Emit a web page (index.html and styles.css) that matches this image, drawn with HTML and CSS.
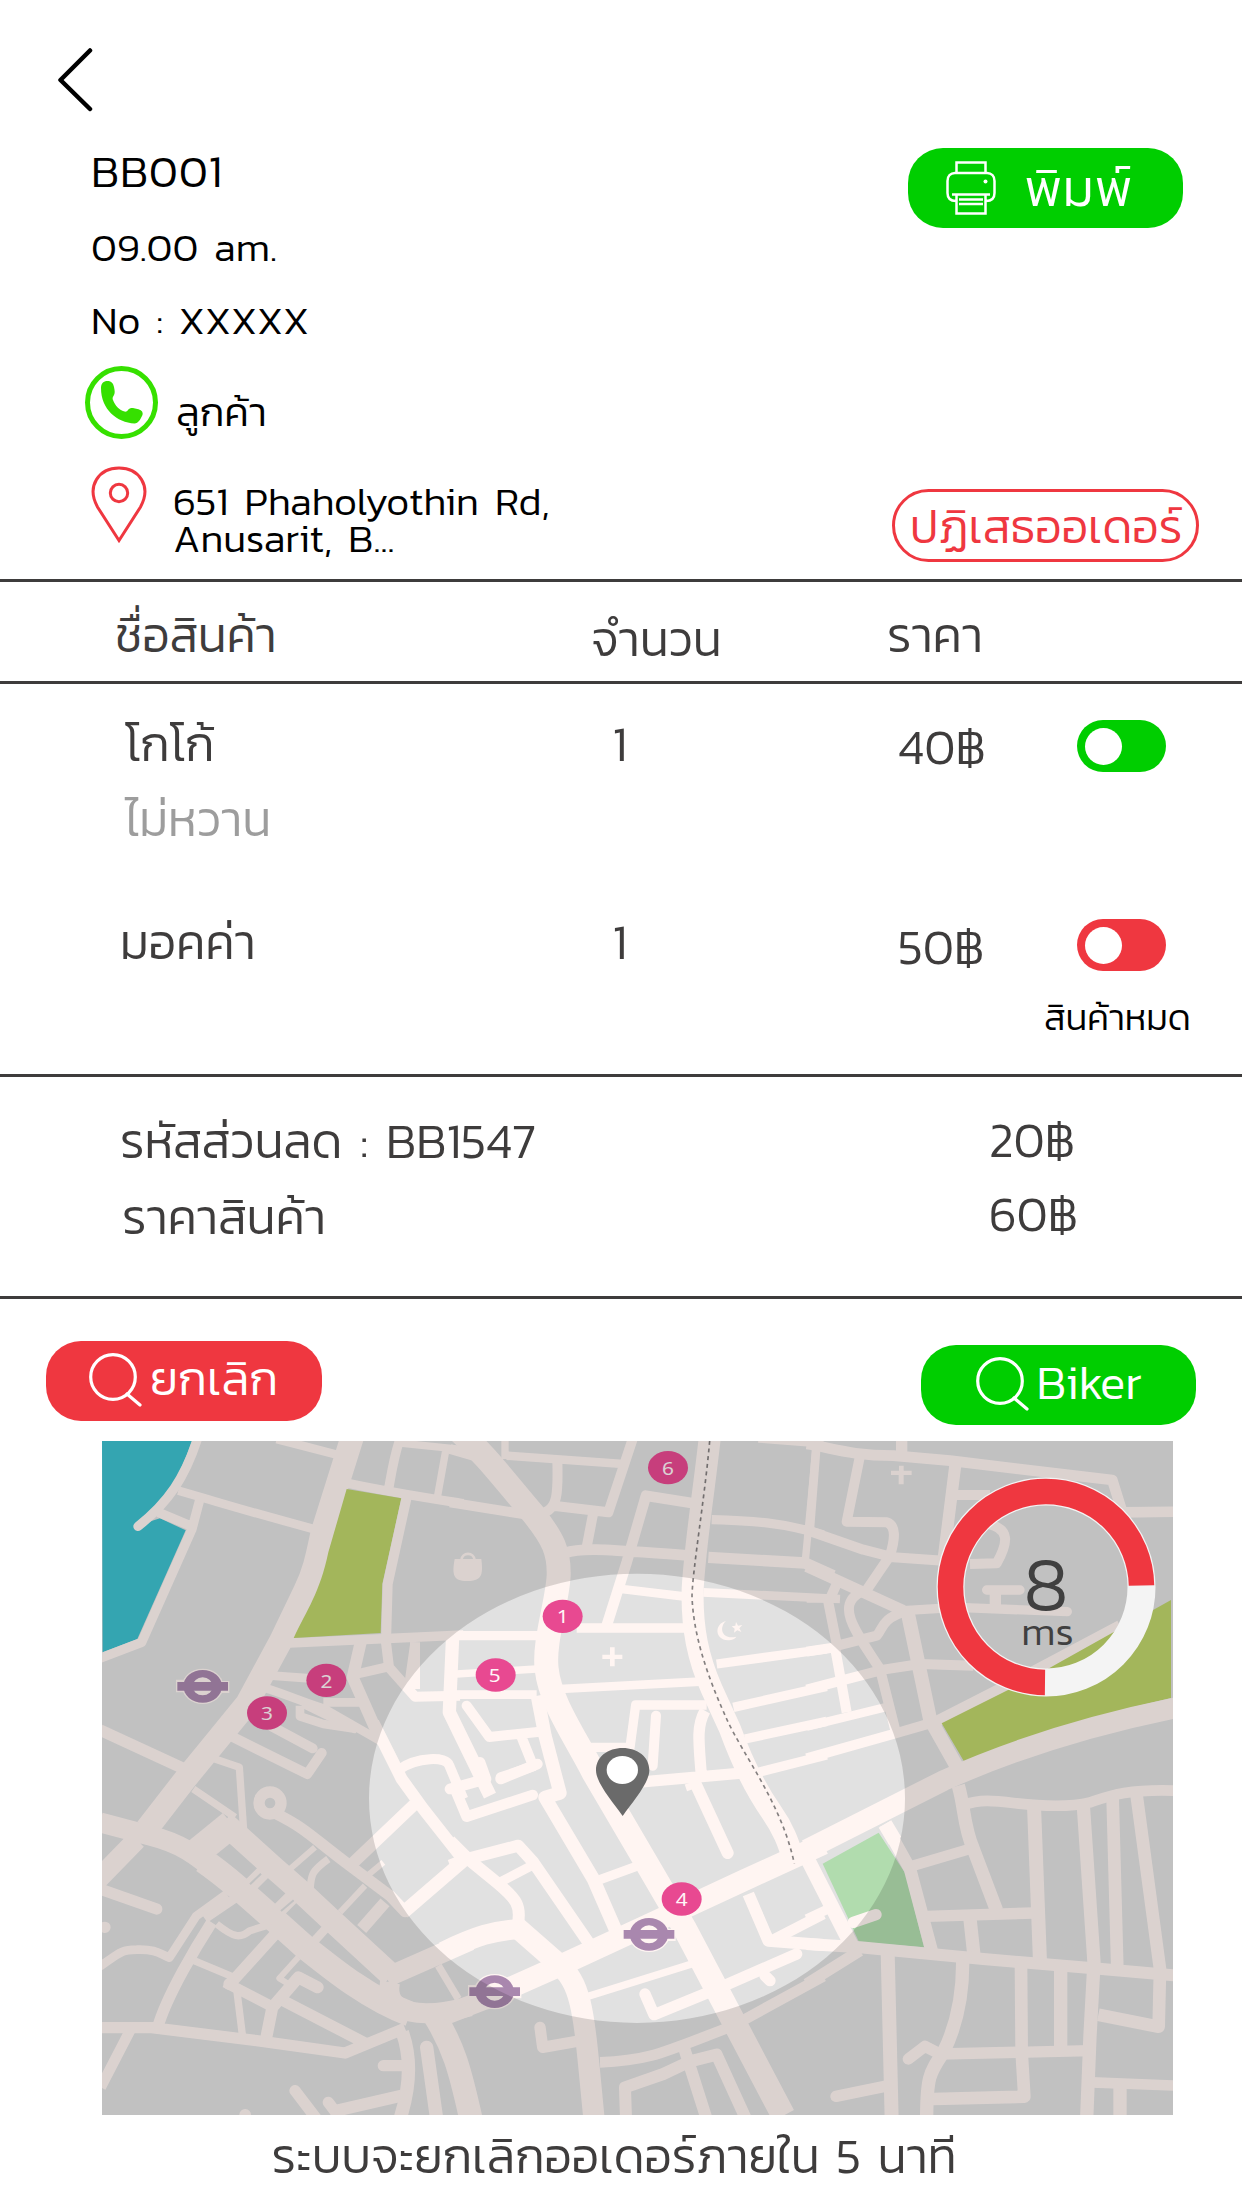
FILE: index.html
```
<!DOCTYPE html>
<html lang="th">
<head>
<meta charset="utf-8">
<title>BB001</title>
<link rel="stylesheet" href="styles.css">
</head>
<body>
<main class="screen">
  <header class="order">
    <nav class="topbar">
      <svg class="back" viewBox="0 0 36 66"><path d="M33 3.500L3.500 33L33 62"/></svg>
    </nav>
    <div class="order-body">
      <div class="details">
        <h1 class="order-id">BB001</h1>
        <p class="line">09.00 am.</p>
        <p class="line">No : XXXXX</p>
        <div class="contact">
          <svg class="phone" viewBox="0 0 73 73">
            <circle cx="36.500" cy="36.500" r="34"/>
            <path d="M16 22C16 17.500 18.500 15 22.500 15C26.500 15 28.300 17.500 29 21C29.800 25 30.300 27.500 28.500 30C27.300 31.500 27.500 33 28 34C30.500 40 33.500 43.500 39.500 45.500C41 46 42 45.300 43 44C44.500 42.300 46.500 41.800 49 42.300L53.500 43.300C57 44.300 58.300 46.500 57.500 49C55.500 53 53.500 57.500 49.500 57.500C32 56.500 16 43.500 16 22Z"/>
          </svg>
          <span class="customer">ลูกค้า</span>
        </div>
        <div class="address">
          <svg class="place" viewBox="0 0 56 78">
            <path d="M28 74.500L6.500 41C-5 20 8 2 28 2S61 20 49.500 41Z"/>
            <circle cx="28" cy="27" r="8.700"/>
          </svg>
          <p class="address-text">651 Phaholyothin Rd,<br>Anusarit, B...</p>
        </div>
      </div>
      <div class="order-actions">
        <button class="btn btn-print">
          <svg class="printer" viewBox="0 0 50 54">
            <path d="M10.500 12V1.500H39.500V12M10 40C4 40 1.500 37 1.500 32V20C1.500 15 4.500 12 9 12H41C45.500 12 48.500 15 48.500 20V32C48.500 37 46 40 40 40M6 33.500H44M10.500 34V52.500H39.500V34M13 38.500H37M13 43H37"/>
            <circle cx="39.500" cy="20.500" r="2"/>
          </svg>
          <span>พิมพ์</span>
        </button>
        <button class="btn-reject">ปฏิเสธออเดอร์</button>
      </div>
    </div>
  </header>

  <section class="items">
    <div class="row head">
      <span class="name">ชื่อสินค้า</span>
      <span class="qty">จำนวน</span>
      <span class="price">ราคา</span>
    </div>
    <div class="row item">
      <div class="name cocoa">โกโก้<small class="option">ไม่หวาน</small></div>
      <span class="qty">1</span>
      <span class="price">40฿</span>
      <div class="stock"><i class="toggle on"></i></div>
    </div>
    <div class="row item last">
      <div class="name mocha">มอคค่า</div>
      <span class="qty">1</span>
      <span class="price">50฿</span>
      <div class="stock"><i class="toggle off"></i><span class="soldout">สินค้าหมด</span></div>
    </div>
  </section>

  <section class="totals">
    <div class="total"><span class="label">รหัสส่วนลด : BB1547</span><span class="value">20฿</span></div>
    <div class="total second"><span class="label">ราคาสินค้า</span><span class="value">60฿</span></div>
  </section>

  <section class="search-actions">
    <button class="btn btn-cancel"><svg class="lens" viewBox="0 0 54 54"><circle cx="24" cy="24" r="22.300"/><path d="M38 41L51 52"/></svg><span>ยกเลิก</span></button>
    <button class="btn btn-biker"><svg class="lens" viewBox="0 0 54 54"><circle cx="24" cy="24" r="22.300"/><path d="M38 41L51 52"/></svg><span>Biker</span></button>
  </section>

  <section class="map">
    <svg class="map-art" viewBox="0 0 3213 2022">
      <defs>
        <g id="station">
          <path class="halo" d="M-76-16H-52V-20H52V-12H76V16H52V20H-52V14H-76Z"/>
          <ellipse class="halo" rx="58" ry="49"/>
          <ellipse class="metro" rx="58" ry="49"/>
          <ellipse class="hole" rx="30" ry="27"/>
          <path class="metro" d="M-76-13H76V13H-76Z"/>
        </g>
      </defs>
      <rect class="land" width="3213" height="2022"/>

      <!-- north west -->
      <g transform="translate(-36 -36)" class="roads">
        <path class="water" d="M36 36H306C285 95 260 150 238 185C205 235 175 262 140 290L210 268L287 304L142 630L38 670Z"/>
        <path class="w28 round" d="M322 30C285 145 235 220 144 292"/>
        <path class="w28" d="M205 250L300 290M331 205L306 300L155 640L30 688"/>
        <path class="w26" d="M265 185L345 208C450 240 560 270 670 300M560 30L740 77"/>
        <path class="w70" d="M788 20L697 310C680 390 672 430 645 485L573 635L470 825L290 1045L170 1200"/>
        <path class="w28" d="M770 162C900 190 1000 205 1120 224M930 30C912 80 905 130 895 185M600 642L1120 618M800 735L900 712M975 640L955 780"/>
        <path class="w22" d="M930 42L1120 62M1068 60L1043 200"/>
        <path class="park" d="M770 180L934 208L877 465L872 612L611 627C650 545 690 490 715 370Z"/>
        <path class="w30" d="M950 205L893 465L888 640L897 715L975 803L1110 800"/>
        <path class="w36" d="M812 640L788 745L870 930"/>
        <path class="w26" d="M545 740L660 748M700 820H830M630 830V862L700 885L800 900M520 775C600 800 640 820 700 838L870 935"/>
        <path class="w30" d="M640 822L800 900M975 640V780"/>
        <path class="w30 round" d="M545 892L668 958M430 925L652 1035L695 972"/>
        <path class="w22" d="M375 990L448 1015L462 1220"/>
        <path class="w34" d="M30 903L290 1023"/>
        <path class="w40" d="M1088 620L1078 850L1200 1100"/>
        <path class="w36" d="M850 880L935 1050L1000 1140L1110 1280"/>
        <path class="w30" d="M930 1020C980 985 1070 980 1078 1010L1120 1110"/>
      </g>

      <!-- south west -->
      <g transform="translate(-36 984)" class="roads">
        <path class="w60" d="M30 160L180 200C280 225 320 260 400 325M20 335L140 212"/>
        <path class="w75" d="M340 275C420 330 500 405 640 530C740 610 840 690 960 735"/>
        <path class="w84" d="M320 250L425 165"/>
        <path class="w70" d="M400 160L550 295L630 365L715 445L905 620"/>
        <path class="w44" d="M470 360L530 300M560 430L620 370"/>
        <path class="w26" d="M665 525L715 470"/>
        <path class="slit" d="M480 346L513 314M573 426L611 394"/>
        <path class="w34 round" d="M30 360L200 420M44 475H45M880 890H940M615 965L680 1050M715 1000L745 1040M465 1037H466"/>
        <path class="w26" d="M30 592C90 550 95 542 140 542C200 540 210 555 238 566L318 442L410 375M345 450L440 385"/>
        <path class="w34" d="M365 460C320 530 230 680 203 775M30 776L185 776L500 815L765 852L945 778M560 490L420 645M580 695L825 822"/>
        <path class="w22" d="M380 465C430 505 450 510 480 485L545 465M305 572L425 622M310 60L435 145M440 660L458 805M715 270C660 310 665 320 660 360"/>
        <path class="w32" d="M405 640L550 715M120 785L32 955"/>
        <path class="w36 round" d="M530 800L547 715L625 625L683 655M418 645H419"/>
        <path class="w18" d="M625 565L568 628L600 648M675 235L600 300M825 350L750 430M820 330L880 280"/>
        <circle class="w34" cx="540" cy="102" r="33"/>
        <path class="w34 round" d="M560 135C650 180 660 200 780 290L900 380L945 428"/>
        <path class="w36" d="M775 295L985 95M740 1025L935 980M885 400L815 480"/>
        <path class="w40" d="M940 430L1120 275M937 790C962 860 962 950 930 1050"/>
        <path class="w60" d="M890 625L1140 515M900 640C880 740 1000 750 1140 712"/>
        <path class="w22" d="M1045 590L1105 690"/>
        <path class="w40 round" d="M1010 835L1040 1050"/>
        <path class="w70" d="M1030 735C1090 830 1110 900 1145 1060"/>
      </g>

      <!-- north centre -->
      <g transform="translate(1044 -36)" class="roads">
        <path class="w72" d="M20 0C110 80 160 150 250 255C310 330 328 370 326 440C322 520 280 640 290 720C300 820 380 930 430 1030L600 1320L705 1500L1000 2060"/>
        <path class="w30" d="M0 60L70 80M0 220L230 257"/>
        <path class="w22" d="M165 30V90M20 735L260 720M1100 36L1066 395M925 30L1120 45"/>
        <path class="w26" d="M170 80L520 105M515 480L700 502M760 490L1170 510M0 797H260M330 780L750 758"/>
        <path class="w30" d="M548 30L475 250L310 230M322 95C325 200 320 235 285 250M430 250L408 365"/>
        <path class="w32" d="M345 372C400 352 500 365 725 380M725 222L588 200L530 400L470 590"/>
        <path class="w66" d="M780 20C760 200 735 350 728 480C725 600 745 690 785 780L840 900C880 1010 930 1100 965 1150C1000 1200 1015 1240 1030 1290"/>
        <path class="w28" d="M785 272C900 275 1000 280 1120 318M380 597H705M800 705L1130 660M850 835L1130 772M885 930L1130 877M925 1030L1130 978M0 620H265"/>
        <path class="w34" d="M775 385L1065 402L1150 440M560 1060L900 1030M765 845C740 890 745 930 755 1050"/>
        <path class="w30 round" d="M50 830L118 924L270 908M215 925L250 1012L152 1045M618 860L608 1010"/>
        <path class="w40" d="M262 800L285 920L330 1092L285 1105L430 1350L500 1510"/>
        <path class="w28" d="M410 955L540 955L557 828L770 828"/>
        <path class="w36 round" d="M730 1050L833 1272"/>
        <path class="glyph" d="M480 655h14v22h23v13h-23v22h-14v-22h-23v-13h23Z"/>
        <path class="glyph" d="M14 390H94C100 440 95 455 53 456S5 440 14 390Z"/>
        <path class="bag-handle" d="M34 394C36 368 72 368 74 394"/>
        <path class="glyph" d="M828 576C792 585 794 632 834 634C846 634 856 628 859 623C815 634 806 595 828 576ZM858 579l6 11 13-2-9 10 6 11-12-5-10 7 2-12-9-7 11-2Z"/>
      </g>

      <!-- south centre -->
      <g transform="translate(1044 984)" class="roads">
        <path class="w32 round" d="M15 60L50 143L248 78M0 60L108 30L90 -20M152 30L262 -15"/>
        <path class="w36" d="M0 290L50 270L205 230L250 280L415 520M0 215L60 275L140 340C200 390 215 410 203 470M700 830L770 1050M528 1050L525 955L640 915L720 877L800 857L888 1050"/>
        <path class="w28" d="M140 345L245 290M450 332L565 290"/>
        <path class="w60" d="M-20 548C80 500 130 485 210 480M-20 740L110 690"/>
        <path class="w64" d="M200 475L320 580C400 650 400 720 432 1050"/>
        <path class="w65" d="M100 692L330 590L600 465L880 335L1120 225"/>
        <path class="w36" d="M895 375L955 515L1120 528"/>
        <path class="w32" d="M970 512L1120 435M450 880C600 875 640 850 850 770L1120 622"/>
        <path class="w22" d="M415 682L725 585"/>
        <path class="w34 round" d="M585 675L612 737L800 660L1040 555M945 620L960 635M270 775L278 835L380 817"/>
        <path class="w40" d="M723 40L730 60"/>
      </g>

      <!-- north east -->
      <g transform="translate(2124 -36)" class="roads">
        <path class="w32" d="M-10 45C60 55 120 80 250 80L420 95L907 153L937 250L1100 248"/>
        <path class="w34" d="M275 30V80M-10 412L280 545M365 885L600 765L930 590"/>
        <path class="w26" d="M20 40L-2 320M-10 508H60M-10 893L225 835"/>
        <path class="w30" d="M150 80L110 278L230 280C260 290 255 330 240 380L165 490M-10 303L160 362L250 385L400 395M480 405L560 403C595 340 600 300 535 285M437 198H540M150 490C80 530 130 600 210 720L255 900M80 465L55 520L82 655M82 650L200 620C220 600 210 570 290 545M-10 782L220 722L330 705L490 710M-10 668L75 655L110 850M-10 988L250 915L370 880"/>
        <path class="w36" d="M437 100L400 395"/>
        <path class="w28 round" d="M280 545L440 535L772 548M530 483H630"/>
        <path class="w34" d="M556 490V540"/>
        <path class="w42" d="M293 550L360 870L450 1030"/>
        <path class="park" d="M395 883L650 755L1083 513V807C850 860 640 930 463 999Z"/>
        <path class="w62" d="M1110 834C850 886 600 965 400 1055L-10 1262"/>
        <path class="glyph" d="M267 110h14v15h24v13h-24v28h-15v-28h-23v-13h24Z"/>
      </g>

      <!-- south east -->
      <g transform="translate(2124 984)" class="roads">
        <path class="garden" d="M38 284L206 191L287 315L342 535L147 519L114 447Z"/>
        <path class="w34 round" d="M130 460L198 437M295 870L345 832L390 855M78 982L235 950"/>
        <path class="w44" d="M-5 275L125 530M225 165L255 215"/>
        <path class="w38" d="M225 165L300 300L365 545M908 90L922 600M980 80L1050 600L1046 773L865 737"/>
        <path class="w32" d="M310 290L485 238M460 108C510 90 550 95 620 103C700 112 780 115 840 100C900 80 950 60 1100 65M845 940L1100 950"/>
        <path class="w40" d="M445 50C465 120 460 170 490 240L560 425M480 450L492 560M458 570C460 700 430 790 400 850C360 910 350 920 350 1050M752 590V840M930 950V1050M820 110L852 580L840 800L830 1050"/>
        <path class="w42" d="M672 110L690 580M233 550L245 1050"/>
        <path class="w34" d="M350 442L670 432M385 855L840 845M-10 645L150 545"/>
        <path class="w36" d="M-10 525L150 535L520 570L850 598L1100 620"/>
        <path class="w28" d="M-10 450L65 415"/>
        <path class="w38 round" d="M633 590L635 850L643 983L370 990"/>
      </g>

      <path class="rail" d="M1823 0C1809 164 1772 384 1770 464C1774 604 1834 744 1874 834C1924 944 2040 1090 2077 1268"/>
      <use href="#station" x="302" y="736"/>
      <use href="#station" x="1178" y="1652"/>
      <use href="#station" x="1641" y="1480"/>
      <g class="pins">
        <ellipse cx="673" cy="718" rx="60" ry="50"/><ellipse cx="495" cy="816" rx="60" ry="50"/>
        <ellipse cx="1698" cy="80" rx="60" ry="50"/><ellipse cx="1382" cy="526" rx="60" ry="50"/>
        <ellipse cx="1181" cy="702" rx="60" ry="50"/><ellipse cx="1739" cy="1374" rx="60" ry="50"/>
      </g>
      <g class="pin-labels">
        <text transform="translate(673 740) scale(1.180 1)">2</text><text transform="translate(495 837) scale(1.180 1)">3</text>
        <text transform="translate(1698 101) scale(1.180 1)">6</text><text transform="translate(1382 547) scale(1.180 1)">1</text>
        <text transform="translate(1178 722) scale(1.180 1)">5</text><text transform="translate(1739 1395) scale(1.180 1)">4</text>
      </g>
      <path class="shade" fill-rule="evenodd" d="M0 0H3213V2022H0ZM801 1072A804 674 0 0 0 2409 1072A804 674 0 0 0 801 1072Z"/>
      <path class="here" d="M1562 1125C1530 1080 1482 1025 1482 988C1482 947 1518 921 1562 921S1642 947 1642 988C1642 1025 1594 1080 1562 1125Z"/>
      <ellipse class="here-dot" cx="1561" cy="987" rx="47" ry="42"/>
    </svg>
    <div class="timer">
      <svg class="ring" viewBox="0 0 220 220">
        <circle class="ring-track" cx="110" cy="110" r="95.500"/>
        <path class="ring-value" d="M205.500 108.500A95.500 95.500 0 1 0 109 205.500"/>
      </svg>
      <span class="count">8</span>
      <span class="unit">ms</span>
    </div>
  </section>
  <p class="notice">ระบบจะยกเลิกออเดอร์ภายใน 5 นาที</p>
</main>
</body>
</html>
```

FILE: styles.css
```
* { box-sizing: border-box; margin: 0; padding: 0; }
body { background: #fff; font-family: Kanit, "Noto Sans", sans-serif; font-weight: 300; color: #000; }
svg { display: block; fill: none; }
button { font: inherit; border: 0; background: none; color: inherit; }

.screen { width: 1242px; height: 2208px; overflow: hidden; }

/* order header */
.order { height: 579px; }
.topbar { height: 141px; padding: 47px 0 0 57px; }
.back { width: 36px; height: 66px; stroke: #000; stroke-width: 4.5; stroke-linecap: round; stroke-linejoin: round; }
.order-body { display: flex; justify-content: space-between; }
.details { width: 600px; padding-left: 91px; }
.order-id { font-size: 45px; line-height: 60px; font-weight: 300; letter-spacing: .7px; }
.line { font-size: 40px; line-height: 40px; word-spacing: 6.500px; margin-top: 25.500px; }
.line + .line { margin-top: 33.500px; }
.contact { display: flex; margin: 26px 0 0 -6px; height: 73px; }
.phone { width: 73px; height: 73px; stroke: #36e000; stroke-width: 5; }
.phone path { fill: #36e000; stroke: none; }
.customer { font-size: 40.500px; line-height: 60px; margin: 16px 0 0 18px; }
.address { display: flex; margin-top: 27px; }
.place { width: 56px; height: 78px; stroke: #ef3740; stroke-width: 3; }
.address-text { font-size: 40px; line-height: 37px; word-spacing: 7px; margin: 17px 0 0 26px; white-space: nowrap; }
.order-actions { display: flex; flex-direction: column; align-items: flex-end; }

.btn { display: flex; color: #fff; height: 79.500px; width: 275.500px; border-radius: 35px; line-height: 80px; white-space: nowrap; }
.btn-print { background: #00ce00; margin: 7px 59px 0 0; padding: 13px 0 0 38px; font-size: 52px; letter-spacing: .8px; }
.btn-print span { margin: -13px 0 0 29px; line-height: 81px; }
.printer { width: 50px; height: 54px; stroke: #fff; stroke-width: 2.500; }
.printer circle { fill: #fff; stroke: none; }
.btn-reject { width: 307px; height: 73px; border: 3px solid #ef3740; border-radius: 37px; color: #ef3740; font-size: 46.800px; line-height: 69px; margin: 261.500px 43px 0 0; padding: 0 0 0 1px; white-space: nowrap; }

/* item table */
.items, .totals, .notice { color: #3e3c3c; font-size: 48.300px; line-height: 60px; }
.row { display: grid; grid-template-columns: 591px 296px 158px 1fr; }
.head { height: 105px; border-top: 3px solid #3e3c3c; border-bottom: 3px solid #3e3c3c; padding-top: 23px; }
.head .name { padding-left: 115px; font-size: 48px; }
.head .qty { margin-top: 4px; }
.item { padding-top: 29.500px; height: 198px; }
.last { height: 190px; }
.cocoa { padding-left: 125px; }
.mocha { padding-left: 120px; }
.option { display: block; font-size: 1em; color: #9d9d9d; margin-top: 15.500px; }
.item .qty { padding-left: 21.500px; }
.item .price { padding: 3.500px 0 0 11px; }
.last .price { padding-top: 5.500px; }
.stock { display: flex; flex-direction: column; padding-top: 6px; }
.last .stock { padding-top: 7px; }
.toggle { width: 89px; height: 52.500px; border-radius: 27px; margin-left: 31.500px; padding: 8px; }
.toggle::before { content: ""; display: block; width: 37px; height: 37px; border-radius: 50%; background: #fff; }
.on { background: #00ce00; }
.off { background: #ef3740; }
.soldout { color: #000; font-size: 36.200px; line-height: 40px; margin: 26px 0 0 -1px; }

.totals { height: 225px; border-top: 3px solid #3e3c3c; border-bottom: 3px solid #3e3c3c; margin-top: 2px; padding-top: 34px; word-spacing: 6.500px; }
.total { display: flex; padding-left: 120px; height: 76px; }
.second { padding-left: 122px; }
.label { width: 869px; }
.second .label { width: 867px; }
.value { margin-top: -1.500px; }
.second .value { margin-top: -3px; }

/* search buttons */
.search-actions { display: flex; justify-content: space-between; padding: 42px 46px 0 46px; height: 142px; }
.search-actions .btn { font-size: 47.500px; line-height: 78px; }
.btn-cancel { background: #ef3740; padding: 12px 0 0 43px; }
.btn-biker { background: #00ce00; margin-top: 4px; padding: 12px 0 0 55px; }
.lens { width: 54px; height: 54px; stroke: #fff; stroke-width: 3.200; stroke-linecap: round; }
.search-actions span { margin: -13px 0 0 7px; }

/* map */
.map { position: relative; width: 1071px; height: 674px; margin-left: 102px; }
.map-art { width: 1071px; height: 674px; }
.land { fill: #e1e1e1; }
.roads { stroke: #fff5f2; stroke-linejoin: round; }
.water { fill: #3dc1ce; stroke: none; }
.park { fill: #bed46a; stroke: none; }
.garden { fill: #b1dcae; stroke: none; }
.glyph { fill: #fff5f2; stroke: none; }
.bag-handle { stroke-width: 8; }
.round { stroke-linecap: round; }
.w18 { stroke-width: 18; } .w22 { stroke-width: 22; } .w26 { stroke-width: 26; } .w28 { stroke-width: 28; }
.w30 { stroke-width: 30; } .w32 { stroke-width: 32; } .w34 { stroke-width: 34; } .w36 { stroke-width: 36; }
.w38 { stroke-width: 38; } .w40 { stroke-width: 40; } .w42 { stroke-width: 42; } .w44 { stroke-width: 44; }
.w60 { stroke-width: 60; } .w62 { stroke-width: 62; } .w64 { stroke-width: 64; } .w65 { stroke-width: 65; }
.w66 { stroke-width: 66; } .w70 { stroke-width: 70; } .w72 { stroke-width: 72; } .w75 { stroke-width: 75; }
.w84 { stroke-width: 84; }
.slit { stroke: #e1e1e1; stroke-width: 6; }
.rail { stroke: #858080; stroke-width: 5; stroke-dasharray: 12 11; }
.halo { fill: #fff5f2; stroke: #fff5f2; stroke-width: 8; }
.metro { fill: #a987ae; }
.hole { fill: #fff5f2; }
.pins { fill: #e84991; }
.pin-labels { fill: #fff5f7; font: 400 53px "Noto Sans", sans-serif; text-anchor: middle; }
.shade { fill: #000; fill-opacity: .14; }
.here { fill: #6a6a6a; }
.here-dot { fill: #fff; }

.timer { position: absolute; left: 834px; top: 36px; width: 220px; height: 220px; display: flex; flex-direction: column; align-items: center; color: #404040; }
.ring { position: absolute; inset: 0; width: 220px; height: 220px; }
.ring-track { stroke: #f4f4f4; stroke-width: 28; }
.ring-value { stroke: #ef3740; stroke-width: 25.500; }
.count { font-size: 77px; line-height: 70px; margin-top: 71px; }
.unit { font-size: 40px; line-height: 34px; margin: -4px 0 0 3px; }

.notice { text-align: center; word-spacing: 5.500px; padding: 11px 14px 0 0; white-space: nowrap; }
```
